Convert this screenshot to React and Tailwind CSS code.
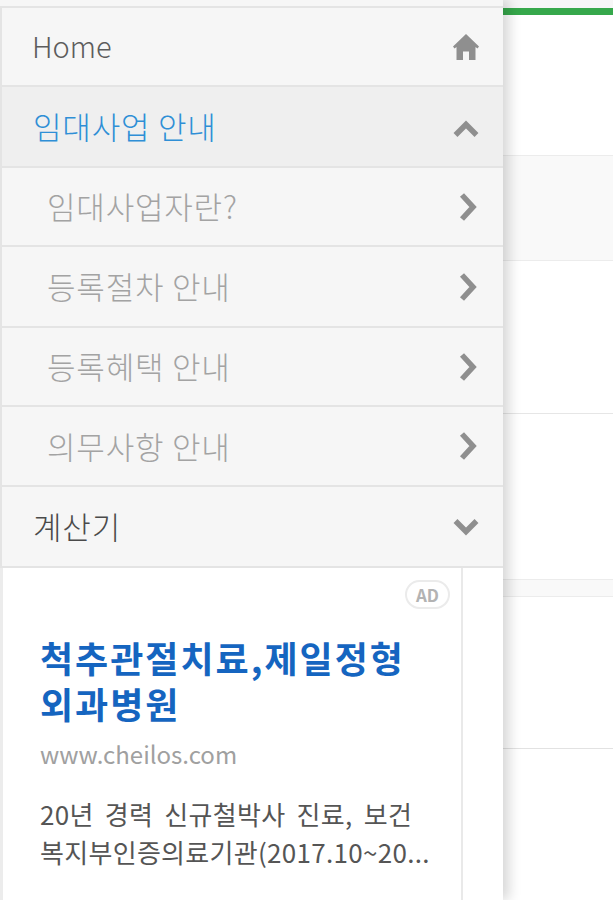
const font = "font-['Noto_Sans_CJK_KR','Noto_Sans',sans-serif]";

const subItems = [
  { label: "임대사업자란?", height: "h-[79px]" },
  { label: "등록절차 안내", height: "h-[81px]" },
  { label: "등록혜택 안내", height: "h-[79px]" },
  { label: "의무사항 안내", height: "h-[80px]" },
];

function Row({ children, icon, className = "" }) {
  return (
    <div className={`flex items-center justify-between border-b-2 border-[#e4e4e4] pr-[24px] ${className}`}>
      {children}
      {icon}
    </div>
  );
}

function HomeIcon() {
  return (
    <svg width="26" height="28" viewBox="0 0 26 28" fill="#8f8f8f">
      <path d="M13 1 L26 13.5 L24.5 15.5 L22.5 14 V27 H16 V18.5 H10 V27 H3.5 V14 L1.5 15.5 L0 13.5 Z" />
    </svg>
  );
}

function Chevron({ points }) {
  return (
    <svg width="26" height="28" viewBox="0 0 26 28" fill="none">
      <polyline points={points} stroke="#8f8f8f" strokeWidth="5.5" />
    </svg>
  );
}

export default function App() {
  return (
    <div className={`relative h-[900px] w-[613px] overflow-hidden bg-white ${font}`}>
      {/* page behind the drawer */}
      <div className="flex h-full flex-col pl-[503px]">
        <div className="h-[8px] bg-[#f6f6f6]" />
        <div className="h-[7px] bg-[#36a84b]" />
        <div className="h-[141px] border-b border-[#ececec]" />
        <div className="h-[105px] border-b border-[#ececec] bg-[#f9f9f9]" />
        <div className="h-[153px] border-b border-[#e6e6e6]" />
        <div className="h-[165px]" />
        <div className="h-[18px] border-y border-[#ececec] bg-[#f9f9f9]" />
        <div className="h-[152px] border-b border-[#e2e2e2]" />
      </div>

      {/* drawer */}
      <div className="absolute top-0 left-0 flex h-full w-[503px] flex-col bg-[#f6f6f6] pt-[6px] shadow-[6px_0_12px_rgba(0,0,0,0.16)]">
        <div className="border-t-2 border-l-2 border-[#e4e4e4]">
          <Row icon={<HomeIcon />} className="h-[79px] pl-[30px]">
            <span className="pb-[2px] text-[29px] font-light text-[#5c5c5c]">Home</span>
          </Row>
          <Row icon={<Chevron points="2.5,22 13,11.5 23.5,22" />} className="h-[81px] bg-[#efefef] pl-[31px]">
            <span className="text-[31px] font-light tracking-[0.8px] text-[#2f8fd6]">임대사업 안내</span>
          </Row>
          {subItems.map((item) => (
            <Row key={item.label} icon={<Chevron points="9,2 20,14 9,26" />} className={`${item.height} pl-[45px]`}>
              <span className="text-[31px] font-light tracking-[0.8px] text-[#a3a3a3]">{item.label}</span>
            </Row>
          ))}
          <Row icon={<Chevron points="2.5,8 13,18.5 23.5,8" />} className="h-[81px] pl-[31px]">
            <span className="text-[31px] font-light tracking-[0.8px] text-[#4a4a4a]">계산기</span>
          </Row>
        </div>

        {/* ad card */}
        <div className="min-h-0 flex-1 bg-white">
          <div className="relative h-full w-[463px] border-r-2 border-l-[3px] border-r-[#e9e9e9] border-l-[#ececec] pt-[66px] pr-[30px] pl-[37px]">
            <span className="absolute top-[12px] right-[11px] rounded-full border-2 border-[#ebebeb] px-[9px] text-[17px] leading-[25px] font-bold text-[#b3b3b3]">
              AD
            </span>
            <h2 className="text-[36px] leading-[46px] font-bold tracking-[2px] text-[#1565c0]">척추관절치료,제일정형외과병원</h2>
            <p className="mt-[12px] text-[24px] leading-[32px] text-[#a0a0a0]">www.cheilos.com</p>
            <p className="mt-[25px] text-[26px] leading-[38px] tracking-[0.3px] [word-spacing:5px] text-[#555555]">
              20년 경력 신규철박사 진료, 보건
              <br />
              복지부인증의료기관(2017.10~20...
            </p>
          </div>
        </div>
      </div>
    </div>
  );
}
